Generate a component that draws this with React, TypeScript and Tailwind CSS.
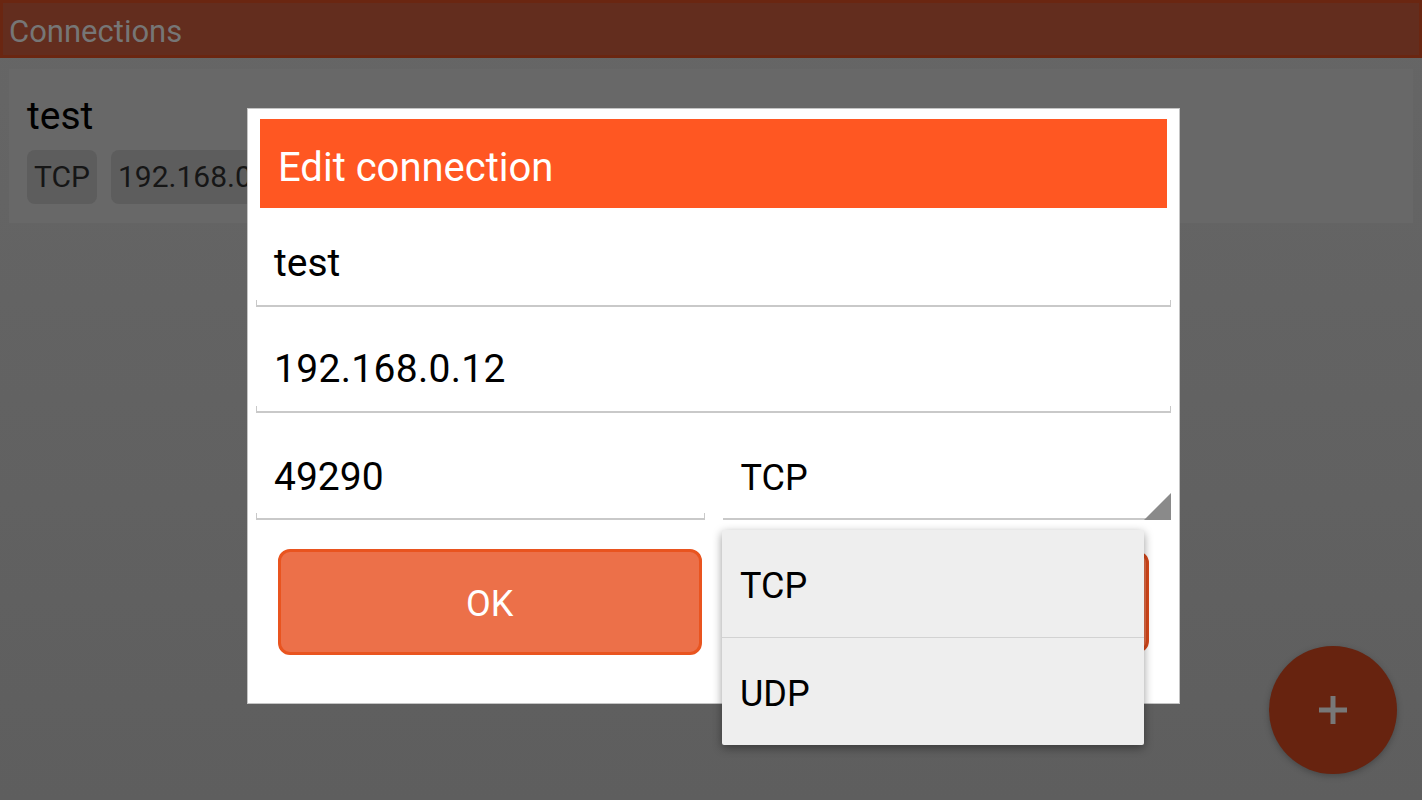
import React from "react";

function Underline({ ticks = true }: { ticks?: boolean }) {
  return (
    <div
      className={
        ticks
          ? "h-[7px] border-x border-b-2 border-[#c9c9c9]"
          : "h-[7px] border-b-2 border-[#c9c9c9]"
      }
    />
  );
}

export default function App() {
  return (
    <div className="relative w-[1422px] h-[800px] overflow-hidden bg-linear-to-b from-[#666666] to-[#5e5e5e] font-['Roboto','Noto_Sans',sans-serif]">
      {/* App bar */}
      <div className="h-[58px] bg-[#632d1e] border-[3px] border-[#6a2611] pl-[6px] pt-[13px]">
        <div className="text-[31px] leading-none text-[#767676]">Connections</div>
      </div>

      {/* Connection card */}
      <div className="mx-[9px] mt-[11px] h-[154px] bg-[#686868] pl-[18px] pt-[28px]">
        <div className="text-[39px] leading-none text-black">test</div>
        <div className="mt-[14px] flex gap-[14px]">
          <div className="h-[54px] rounded-[8px] bg-[#5d5d5d] px-[7px] flex items-center text-[30px] leading-none text-[#161616]">
            TCP
          </div>
          <div className="h-[54px] rounded-[8px] bg-[#5d5d5d] px-[7px] flex items-center text-[30px] leading-none text-[#161616]">
            192.168.0.12
          </div>
          <div className="h-[54px] rounded-[8px] bg-[#5d5d5d] px-[7px] flex items-center text-[30px] leading-none text-[#161616]">
            49290
          </div>
        </div>
      </div>

      {/* Dialog */}
      <div className="absolute left-[247px] top-[108px] w-[933px] h-[596px] bg-white border border-[#c4c4c4]">
        <div className="mx-[12px] mt-[10px] h-[89px] bg-[#ff5722] pl-[18px] pt-[29px]">
          <div className="text-[40px] leading-none text-white">Edit connection</div>
        </div>
        <div className="px-[8px]">
          <div className="pt-[36px]">
            <div className="pl-[18px] text-[39px] leading-none text-black">test</div>
            <div className="mt-[17px]">
              <Underline />
            </div>
          </div>
          <div className="pt-[43px]">
            <div className="pl-[18px] text-[39px] leading-none tracking-[0.3px] text-black">192.168.0.12</div>
            <div className="mt-[17px]">
              <Underline />
            </div>
          </div>
          <div className="pt-[45px] grid grid-cols-2 gap-[18px]">
            <div>
              <div className="pl-[18px] text-[39px] leading-none text-black">49290</div>
              <div className="mt-[16px]">
                <Underline />
              </div>
            </div>
            <div>
              <div className="pl-[18px] pt-[2px] text-[36px] leading-none text-black">TCP</div>
              <div className="relative mt-[17px]">
                <Underline ticks={false} />
                <svg
                  className="absolute right-0 bottom-0"
                  width="27"
                  height="27"
                  viewBox="0 0 27 27"
                >
                  <polygon points="27,0 27,27 0,27" fill="#8a8a8a" />
                </svg>
              </div>
            </div>
          </div>
          <div className="mt-[29px] px-[22px] grid grid-cols-2 gap-[24px]">
            <div className="h-[106px] pt-[3px] rounded-[12px] bg-[#ec7049] border-[3px] border-[#e9541f] flex items-center justify-center text-[36px] leading-none text-white">
              OK
            </div>
            <div className="h-[102px] mt-[2px] rounded-[12px] bg-[#ec7049] border-[3px] border-[#d9481a] flex items-center justify-center text-[36px] leading-none text-white">
              Cancel
            </div>
          </div>
        </div>
      </div>

      {/* Spinner dropdown */}
      <div className="absolute left-[722px] top-[530px] w-[422px] bg-[#eeeeee] rounded-[2px] shadow-[0_3px_10px_rgba(0,0,0,0.4)]">
        <div className="h-[107px] pt-[4px] flex items-center pl-[18px] text-[36px] leading-none text-black">TCP</div>
        <div className="h-px bg-[#d2d2d2]" />
        <div className="h-[107px] pt-[4px] flex items-center pl-[18px] text-[36px] leading-none text-black">UDP</div>
      </div>

      {/* FAB */}
      <div className="absolute left-[1269px] top-[646px] w-[128px] h-[128px] rounded-full bg-[#67230f] shadow-[0_2px_6px_rgba(0,0,0,0.25)] flex items-center justify-center">
        <svg width="28" height="28" viewBox="0 0 28 28">
          <rect x="0" y="11.5" width="28" height="5" fill="#787878" />
          <rect x="11.5" y="0" width="5" height="28" fill="#787878" />
        </svg>
      </div>
    </div>
  );
}
